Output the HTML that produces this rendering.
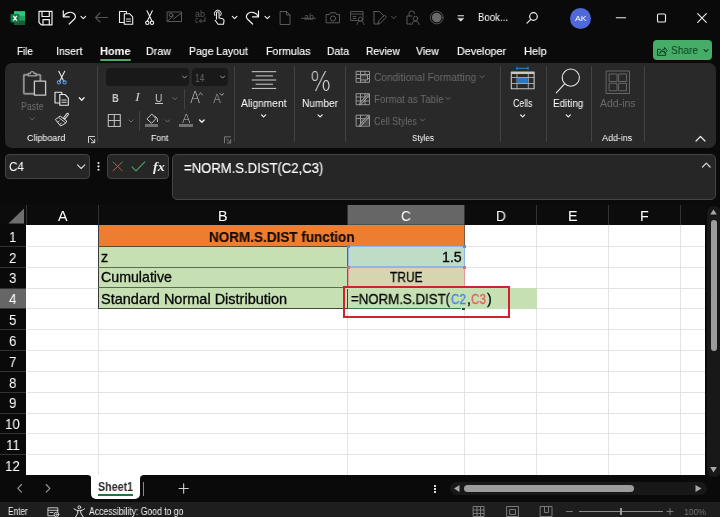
<!DOCTYPE html>
<html><head><meta charset="utf-8"><title>Excel</title>
<style>
*{box-sizing:border-box;margin:0;padding:0}
html,body{width:720px;height:517px;overflow:hidden;background:#0a0a0a}
body{position:relative;font-family:"Liberation Sans",sans-serif;color:#fff;font-size:12px}
.a{position:absolute}
.t{position:absolute;white-space:nowrap;line-height:1;transform-origin:0 0;will-change:transform}
svg{position:absolute;overflow:visible}
#ribbon{left:5px;top:62.8px;width:710.8px;height:85.2px;background:#292929;border-radius:7px}
.sep{position:absolute;width:1px;background:#424242}
.nb{background:#262626;border:1px solid #444;border-radius:4px}
.gl{position:absolute;background:#e3e3e3}
.hl{position:absolute;background:#333}
</style></head><body>
<!-- ===== ribbon panel ===== -->
<div class="a" id="ribbon"></div>
<!-- ===== formula bar boxes ===== -->
<div class="a nb" style="left:5px;top:154px;width:85px;height:25px"></div>
<div class="a nb" style="left:107px;top:154px;width:62px;height:25px"></div>
<div class="a nb" style="left:172px;top:154px;width:543.6px;height:46px;border-radius:5px"></div>
<div class="a" style="left:0;top:204px;width:705px;height:21px;background:#0c0c0c"></div>
<div class="a" style="left:347.3px;top:205px;width:116.9px;height:20.3px;background:#666"></div>
<div class="a" style="left:347.3px;top:224.3px;width:116.9px;height:1.2px;background:#45584c"></div>
<div class="a" style="left:0;top:288px;width:26.3px;height:20.5px;background:#666"></div>
<div class="a" style="left:26.2px;top:225px;width:678.8px;height:250.3px;background:#fff"></div>
<div class="gl" style="left:26.5px;top:245.8px;width:678.5px;height:1px"></div>
<div class="gl" style="left:26.5px;top:266.7px;width:678.5px;height:1px"></div>
<div class="gl" style="left:26.5px;top:287.5px;width:678.5px;height:1px"></div>
<div class="gl" style="left:26.5px;top:308.3px;width:678.5px;height:1px"></div>
<div class="gl" style="left:26.5px;top:329.1px;width:678.5px;height:1px"></div>
<div class="gl" style="left:26.5px;top:350.0px;width:678.5px;height:1px"></div>
<div class="gl" style="left:26.5px;top:370.8px;width:678.5px;height:1px"></div>
<div class="gl" style="left:26.5px;top:391.6px;width:678.5px;height:1px"></div>
<div class="gl" style="left:26.5px;top:412.5px;width:678.5px;height:1px"></div>
<div class="gl" style="left:26.5px;top:433.3px;width:678.5px;height:1px"></div>
<div class="gl" style="left:26.5px;top:454.1px;width:678.5px;height:1px"></div>
<div class="gl" style="left:98.0px;top:225px;width:1px;height:250px"></div>
<div class="gl" style="left:347.0px;top:225px;width:1px;height:250px"></div>
<div class="gl" style="left:464.0px;top:225px;width:1px;height:250px"></div>
<div class="gl" style="left:536.0px;top:225px;width:1px;height:250px"></div>
<div class="gl" style="left:608.0px;top:225px;width:1px;height:250px"></div>
<div class="gl" style="left:680.0px;top:225px;width:1px;height:250px"></div>
<div class="hl" style="left:26.0px;top:205px;width:1px;height:20px"></div>
<div class="hl" style="left:98.0px;top:205px;width:1px;height:20px"></div>
<div class="hl" style="left:347.0px;top:205px;width:1px;height:20px"></div>
<div class="hl" style="left:464.0px;top:205px;width:1px;height:20px"></div>
<div class="hl" style="left:536.0px;top:205px;width:1px;height:20px"></div>
<div class="hl" style="left:608.0px;top:205px;width:1px;height:20px"></div>
<div class="hl" style="left:680.0px;top:205px;width:1px;height:20px"></div>
<div class="hl" style="left:0;top:245.8px;width:26px;height:1px"></div>
<div class="hl" style="left:0;top:266.7px;width:26px;height:1px"></div>
<div class="hl" style="left:0;top:287.5px;width:26px;height:1px"></div>
<div class="hl" style="left:0;top:308.3px;width:26px;height:1px"></div>
<div class="hl" style="left:0;top:329.1px;width:26px;height:1px"></div>
<div class="hl" style="left:0;top:350.0px;width:26px;height:1px"></div>
<div class="hl" style="left:0;top:370.8px;width:26px;height:1px"></div>
<div class="hl" style="left:0;top:391.6px;width:26px;height:1px"></div>
<div class="hl" style="left:0;top:412.5px;width:26px;height:1px"></div>
<div class="hl" style="left:0;top:433.3px;width:26px;height:1px"></div>
<div class="hl" style="left:0;top:454.1px;width:26px;height:1px"></div>
<!-- tab underline + share -->
<div class="a" style="left:99.5px;top:59px;width:31.5px;height:2px;background:#4fa66b;border-radius:1px"></div>
<div class="a" style="left:653.3px;top:40.4px;width:58.4px;height:20px;background:#45ad68;border-radius:4px"></div>
<!-- avatar -->
<div class="a" style="left:569.5px;top:7.5px;width:21px;height:21px;border-radius:50%;background:#4f69d9"></div>
<!-- ribbon separators -->
<div class="sep" style="left:97px;top:66px;height:76px"></div>
<div class="sep" style="left:234px;top:66px;height:76px"></div>
<div class="sep" style="left:294px;top:66px;height:76px"></div>
<div class="sep" style="left:345px;top:66px;height:76px"></div>
<div class="sep" style="left:500px;top:66px;height:76px"></div>
<div class="sep" style="left:545.5px;top:66px;height:76px"></div>
<div class="sep" style="left:591px;top:66px;height:76px"></div>
<div class="sep" style="left:644px;top:66px;height:76px"></div>
<div class="sep" style="left:183.5px;top:89px;height:20px"></div>
<div class="sep" style="left:139px;top:110.5px;height:20px"></div>
<!-- font boxes -->
<div class="a" style="left:106px;top:67.5px;width:83px;height:18.5px;background:#191919;border-radius:4px"></div>
<div class="a" style="left:191.5px;top:67.5px;width:36px;height:18.5px;background:#191919;border-radius:4px"></div>
<!-- U underline, colour bars -->
<div class="a" style="left:155px;top:103px;width:7.5px;height:1px;background:#c8c8c8"></div>
<div class="a" style="left:145px;top:124.2px;width:13px;height:2.8px;background:#727272"></div>
<div class="a" style="left:179.4px;top:124.2px;width:13.6px;height:2.8px;background:#727272"></div>
<!-- cells fills -->
<div class="a" style="left:98.2px;top:225.3px;width:366.3px;height:20.5px;background:#ed7d31"></div>
<div class="a" style="left:98.2px;top:245.8px;width:249.3px;height:62.7px;background:#c6e0b4"></div>
<div class="a" style="left:347.5px;top:246.3px;width:117px;height:20.7px;background:#bedcc6"></div>
<div class="a" style="left:347.5px;top:267px;width:117px;height:21px;background:#d5d5b0"></div>
<div class="a" style="left:347.5px;top:288px;width:189px;height:20.5px;background:#c6e0b4"></div>
<!-- table borders -->
<div class="a" style="left:97.7px;top:225px;width:1px;height:84px;background:#3a3a3a"></div>
<div class="a" style="left:98px;top:245.5px;width:250px;height:1px;background:#5b4a30"></div>
<div class="a" style="left:98px;top:266.8px;width:250px;height:1px;background:#5b6b50"></div>
<div class="a" style="left:98px;top:287.2px;width:250px;height:1px;background:#5b6b50"></div>
<div class="a" style="left:98px;top:308.3px;width:250px;height:1px;background:#3f4a3a"></div>
<div class="a" style="left:347px;top:246px;width:1px;height:42px;background:#5b6b50"></div>
<div class="a" style="left:346.8px;top:288.5px;width:1.5px;height:20.5px;background:#2c4a38"></div>
<div class="a" style="left:464px;top:225px;width:1px;height:21px;background:#7a5a40"></div>
<div class="a" style="left:347.5px;top:245.5px;width:117px;height:1px;background:#8a7a60"></div>
<!-- C2 blue / C3 red range outlines -->
<div class="a" style="left:347.5px;top:246.3px;width:117px;height:21px;border:1px solid #8fb6e6"></div>
<div class="a" style="left:347.5px;top:267px;width:117px;height:21px;border:1px solid #e59a9a"></div>
<div class="a" style="left:346.5px;top:245.3px;width:3px;height:3px;background:#5b8fd8"></div>
<div class="a" style="left:462.5px;top:245.3px;width:3px;height:3px;background:#5b8fd8"></div>
<div class="a" style="left:346.5px;top:265.8px;width:3px;height:3px;background:#d86a8a"></div>
<div class="a" style="left:462.5px;top:265.8px;width:3px;height:3px;background:#d86a8a"></div>
<!-- active cell bottom border + handle -->
<div class="a" style="left:347.5px;top:307.7px;width:113px;height:1.6px;background:#3d7a52"></div>
<div class="a" style="left:462px;top:308px;width:3px;height:2.2px;background:#2a4a36"></div>
<!-- red callout -->
<div class="a" style="left:342.8px;top:285.8px;width:167.4px;height:32px;border:2.8px solid #d0222e"></div>
<!-- select-all triangle -->
<svg style="left:0;top:204px" width="27" height="22"><polygon points="8.5,19.5 24,19.5 24,4.5" fill="#6e6e6e"/></svg>
<!-- scrollbars -->
<div class="a" style="left:706.5px;top:205.5px;width:14px;height:271px;background:#181818;border-radius:7px"></div>
<div class="a" style="left:710.5px;top:219.5px;width:6.5px;height:131.5px;background:#9c9c9c;border-radius:3.5px"></div>
<svg style="left:706px;top:205px" width="14" height="272"><polygon points="4.2,9.5 10.8,9.5 7.5,4.5" fill="#a8a8a8"/><polygon points="4.2,262 10.8,262 7.5,267.5" fill="#a8a8a8"/></svg>
<div class="a" style="left:449.5px;top:481.8px;width:257px;height:13.4px;background:#181818;border-radius:7px"></div>
<div class="a" style="left:464px;top:484.6px;width:170px;height:7px;background:#9c9c9c;border-radius:3.5px"></div>
<svg style="left:449px;top:481px" width="258" height="15"><polygon points="10.5,4 10.5,11 5,7.5" fill="#a8a8a8"/><polygon points="246.5,4 246.5,11 252.5,7.5" fill="#a8a8a8"/></svg>
<div class="a" style="left:434.2px;top:485px;width:1.6px;height:1.6px;background:#ddd;box-shadow:0 3px 0 #ddd,0 6px 0 #ddd"></div>
<!-- sheet tab -->
<div class="a" style="left:91.4px;top:475px;width:48.7px;height:23.6px;background:#fff;border-radius:0 0 5px 5px"></div>
<svg style="left:0;top:0" width="720" height="517"><path d="M87.400 475h4v4a4 4 0 0 0-4-4zM144.100 475h-4v4a4 4 0 0 1 4-4z" fill="#fff"/></svg>
<div class="a" style="left:98px;top:494.4px;width:35px;height:2px;background:#217346"></div>
<div class="a" style="left:143px;top:481.5px;width:1px;height:14.2px;background:#8a8a8a"></div>
<!-- status bar -->
<div class="a" style="left:0;top:502px;width:720px;height:15px;background:#1e1e1e"></div>
<div class="a" style="left:579px;top:511px;width:83.5px;height:1px;background:#8a8a8a"></div>
<div class="a" style="left:620px;top:508px;width:1.5px;height:7px;background:#9a9a9a"></div>

<svg style="left:0;top:0" width="720" height="517" viewBox="0 0 720 517" fill="none" stroke-linecap="round" stroke-linejoin="round">
<!-- ===== QAT ===== -->
<!-- excel logo -->
<g>
<rect x="14" y="11.3" width="11" height="13.7" rx="1" fill="#21a366"/>
<rect x="14" y="11.3" width="11" height="4.5" fill="#33c481"/>
<rect x="14" y="20.5" width="11" height="4.5" rx="1" fill="#185c37"/>
<rect x="10.5" y="14" width="9" height="8.5" rx="1" fill="#107c41"/>
<path d="M13.300 15.800l3.500 4.900M16.800 15.800l-3.500 4.900" stroke="#fff" stroke-width="1.300" stroke-linecap="butt"/>
</g>
<!-- save -->
<g stroke="#f0f0f0" stroke-width="1.2">
<path d="M39 11.300h13v13.500H41.300L39 22.500z"/>
<path d="M42 11.500v5h7.300v-5M43 24.600v-5h6.300v5"/>
</g>
<!-- undo -->
<g stroke="#f0f0f0" stroke-width="1.2">
<path d="M63.300 10.800v6h6"/>
<path d="M63.600 16.500C65.500 12.500 70.500 11 73.700 13.500C76 15.300 75.800 17.700 74.200 19.200L69.200 24"/>
<path d="M81 16.300l2.300 2.300l2.300-2.300" stroke-width="1.100"/>
</g>
<!-- back arrow disabled -->
<path d="M107.500 17.500H95.500M100 13l-4.500 4.500l4.500 4.500" stroke="#555" stroke-width="1.100"/>
<!-- paste/copy -->
<g stroke="#f0f0f0" stroke-width="1.1">
<path d="M124 22.500h-4.500v-11h7v2"/>
<path d="M124.300 13.700h5.200l3.200 3.200v7.300h-8.400z" fill="#0a0a0a"/>
<path d="M126.300 19h4.400M126.300 21.300h4.400" stroke-width="0.9"/>
</g>
<!-- scissors -->
<g stroke="#f0f0f0" stroke-width="1.1">
<path d="M147 10.800l4.800 10M152.300 10.800l-4.800 10"/>
<circle cx="147.300" cy="22.800" r="1.700"/><circle cx="152" cy="22.800" r="1.700"/>
</g>
<!-- mail gray -->
<g stroke="#5a5a5a" stroke-width="1">
<rect x="167.500" y="12" width="14" height="9.500"/>
<path d="M167.500 21l6-5M181.500 13l-8 6"/>
<circle cx="171" cy="15" r="1.800"/>
</g>
<!-- ab arrows gray -->
<g stroke="#5a5a5a" stroke-width="0.9">
<path d="M199.500 21h5.500M201.300 19.200l-1.800 1.800l1.800 1.800M205 17.500v3.500"/>
</g>
<!-- touch hand -->
<g stroke="#f0f0f0" stroke-width="1.1">
<path d="M216.500 19v-6a1.300 1.300 0 0 1 2.600 0v5l3.500.8c1 .3 1.500 1 1.400 2l-.5 3.500h-5.500l-2.800-4"/>
<path d="M214.800 15.500a3.500 3.500 0 1 1 6 0" stroke-width="1"/>
<path d="M232.300 16.300l2.300 2.300l2.300-2.300"/>
</g>
<!-- redo -->
<g stroke="#f0f0f0" stroke-width="1.2">
<path d="M258.500 10.800v6h-6"/>
<path d="M258.200 16.500C256.300 12.500 251.300 11 248.100 13.500C245.800 15.300 246 17.700 247.600 19.200L252.600 24"/>
<path d="M265 16.300l2.300 2.300l2.300-2.300" stroke-width="1.100"/>
</g>
<!-- new doc gray -->
<path d="M280.500 11.500h6l3.500 3.500v9.500h-9.500zM286.500 11.500v3.500h3.500" stroke="#5a5a5a" stroke-width="1"/>
<!-- strike ab -->
<path d="M301.500 18.300h14" stroke="#5a5a5a" stroke-width="0.9"/>
<!-- camera gray -->
<g stroke="#5a5a5a" stroke-width="1">
<path d="M326.500 14.500h3l1-1.800h5l1 1.800h3v8.300h-13z"/>
<circle cx="333" cy="18.500" r="2.600"/>
</g>
<!-- form icon gray -->
<g stroke="#5a5a5a" stroke-width="0.9">
<rect x="351" y="11.500" width="12" height="9"/>
<path d="M351 14h12M353 16.500h3M353 18.500h3"/>
<circle cx="360.500" cy="19" r="2" fill="#0a0a0a"/>
<path d="M357 24.500c.3-2.300 1.700-3.300 3.500-3.300s3.200 1 3.500 3.300" fill="#0a0a0a"/>
</g>
<!-- doc pencil gray -->
<g stroke="#5a5a5a" stroke-width="1">
<path d="M374 11.500h5.500l4 4v1M374 11.500v12.500h5"/>
<path d="M378 23.500l1-3l5.500-5.500l2 2l-5.500 5.500z"/>
<path d="M391.500 16.300l2.300 2.300l2.300-2.300"/>
</g>
<!-- lock person gray -->
<g stroke="#5a5a5a" stroke-width="1">
<path d="M409 16v-2.300a2.800 2.800 0 0 1 5.600 0"/>
<path d="M412 16h-5v8h4"/>
<circle cx="415.500" cy="18.500" r="2.200"/>
<path d="M411.800 24.500c.3-2.300 1.700-3.300 3.700-3.300s3.400 1 3.700 3.300"/>
</g>
<!-- record -->
<circle cx="436.700" cy="17.500" r="6.400" stroke="#5a5a5a" stroke-width="0.9"/>
<circle cx="436.700" cy="17.500" r="4.800" fill="#6a6a6a"/>
<!-- customize qat -->
<path d="M458 15.800h5.600" stroke="#e8e8e8" stroke-width="1.100"/>
<path d="M458 18.500l2.800 2.800l2.800-2.800z" fill="#e8e8e8" stroke="#e8e8e8" stroke-width="0.500"/>
<!-- search -->
<g stroke="#f0f0f0" stroke-width="1.2">
<circle cx="533.500" cy="16.500" r="3.800"/>
<path d="M530.800 19.300l-3.800 3.800"/>
</g>
<!-- window controls -->
<path d="M616.300 17.800h9.300" stroke="#f0f0f0" stroke-width="1.100"/>
<rect x="657.500" y="14" width="8" height="8" rx="1.300" stroke="#f0f0f0" stroke-width="1.100"/>
<path d="M697.700 13.700l8.600 8.600M706.300 13.700l-8.600 8.600" stroke="#f0f0f0" stroke-width="1.100"/>

<!-- ===== RIBBON ===== -->
<!-- paste -->
<g>
<rect x="23.800" y="74.800" width="16.600" height="19" rx="1" stroke="#8e8e8e" stroke-width="1.900"/>
<path d="M28.300 75.800v-2.300h2a1.900 1.900 0 0 1 3.800 0h2v2.300z" stroke="#a0a0a0" stroke-width="1.300" fill="#292929"/>
<rect x="34.400" y="81.200" width="11.200" height="14" fill="#292929" stroke="#cacaca" stroke-width="1.300"/>
</g>
<path d="M30 117.800l2.100 2.100l2.100-2.100" stroke="#6a6a6a" stroke-width="1"/>
<!-- cut -->
<g stroke-width="1.100">
<path d="M58.800 71.300l5.200 10.500M64.700 71.300l-5.200 10.500" stroke="#e8e8e8"/>
<circle cx="58.900" cy="82.300" r="1.700" stroke="#4a90d9"/><circle cx="64.600" cy="82.300" r="1.700" stroke="#4a90d9"/>
</g>
<!-- copy -->
<g stroke="#e8e8e8" stroke-width="1.100">
<path d="M59.500 103h-4.500v-10.800h6.800v2"/>
<path d="M59.800 94.500h5.200l3.300 3.300v7.500h-8.500z" fill="#292929"/>
<path d="M62 100h4.200M62 102.300h4.200" stroke-width="0.900"/>
</g>
<path d="M79.300 97.800l2.400 2.400l2.400-2.400" stroke="#f0f0f0" stroke-width="1.300"/>
<!-- format painter -->
<g stroke="#dcdcdc" stroke-width="1">
<path d="M67.600 114.200l-3 3.700" stroke-width="2.800"/>
<path d="M67.600 114.200l-3 3.700" stroke="#292929" stroke-width="0.900"/>
<path d="M60.500 116.300l6.300 4.700l-1.300 2.300l-4.900 2.700l-5-6.200z"/>
<path d="M59.300 118l6.300 4.800" stroke-width="0.900"/>
<path d="M57.600 122.200l1.600-1.100M59.700 124.400l1.600-1.100" stroke-width="0.800"/>
</g>
<!-- launchers -->
<g stroke="#d0d0d0" stroke-width="1">
<path d="M94.500 136.500h-6v6M90.500 138.500l4 4M94.700 139.300v3.400h-3.400"/>
</g>
<g stroke="#7a7a7a" stroke-width="1">
<path d="M230.500 136.800h-6v6M226.500 138.800l4 4M230.700 139.600v3.400h-3.400"/>
</g>
<!-- font box chevrons -->
<path d="M182.500 76l2.100 2.100l2.100-2.100" stroke="#9a9a9a" stroke-width="1"/>
<path d="M220.500 76l2.100 2.100l2.100-2.100" stroke="#9a9a9a" stroke-width="1"/>
<path d="M172.800 97.600l2.100 2.100l2.100-2.100" stroke="#6e6e6e" stroke-width="1"/>
<!-- A^ Av carets -->
<path d="M198.800 94.800l1.800-1.800l1.800 1.800" stroke="#bcbcbc" stroke-width="0.900"/>
<path d="M220 93.500l1.800 1.800l1.800-1.800" stroke="#bcbcbc" stroke-width="0.900"/>
<!-- borders -->
<g stroke="#bcbcbc" stroke-width="1.100">
<rect x="108.300" y="114.500" width="12" height="12"/>
<path d="M114.300 114.500v12M108.300 120.500h12"/>
</g>
<path d="M128.900 119.900l2.100 2.100l2.100-2.100" stroke="#6e6e6e" stroke-width="1"/>
<!-- fill bucket -->
<g stroke="#c8c8c8" stroke-width="1">
<path d="M152.100 114.300L156 118.700L151.500 123.300L147.100 119.200z"/>
<path d="M154.800 116.300c2.200.7 3 2.700 2.700 5.200"/>
</g>
<path d="M165.400 119.900l2.100 2.100l2.100-2.100" stroke="#6e6e6e" stroke-width="1"/>
<path d="M199.600 120l2.300 2.300l2.300-2.300" stroke="#f0f0f0" stroke-width="1.300"/>
<!-- alignment -->
<g stroke="#cfcfcf" stroke-width="1">
<path d="M252.200 71.700h23.600M256 75.900h16.600M252.200 80h23.600M256 84.200h16.600M252.200 88.400h23.600"/>
</g>
<g stroke="#f0f0f0" stroke-width="1.200">
<path d="M261.500 114.800l2.100 2.100l2.100-2.100"/>
<path d="M318 114.800l2.100 2.100l2.100-2.100"/>
<path d="M520.500 114.800l2.100 2.100l2.100-2.100"/>
<path d="M566.200 114.800l2.100 2.100l2.100-2.100"/>
</g>
<!-- styles icons -->
<g stroke="#969696" stroke-width="1">
<rect x="356.500" y="71.300" width="13" height="11"/>
<path d="M356.500 74.500h13M356.500 78.500h13M360.500 71.300v11M365 71.300v11"/>
<rect x="361" y="75" width="6.500" height="5" fill="#3a3a3a"/>
<rect x="356.500" y="93.700" width="13" height="11"/>
<path d="M356.500 97h13M356.500 101h13M360.500 93.700v11M365 93.700v11"/>
<path d="M369 95.500l-7.500 8.500l-2 .8l.6-2.200l7.400-8.200z" fill="#5a5a5a" stroke="#b0b0b0" stroke-width="0.800"/>
<rect x="356.500" y="115.200" width="13" height="11"/>
<path d="M356.500 118.500h13M360.500 115.200v11"/>
<rect x="361" y="118.800" width="8" height="7" fill="#4a4a4a" stroke="none"/>
<path d="M369 117l-7.500 8.500l-2 .8l.6-2.200l7.400-8.200z" fill="#5a5a5a" stroke="#b0b0b0" stroke-width="0.800"/>
</g>
<g stroke="#6a6a6a" stroke-width="1">
<path d="M480 75.800l2 2l2-2"/>
<path d="M446 97.500l2 2l2-2"/>
<path d="M420.600 119l2 2l2-2"/>
</g>
<!-- cells icon -->
<g>
<path d="M517 68.300h11M517 67v2.600M528 67v2.600" stroke="#2b88d8" stroke-width="1"/>
<rect x="511.300" y="72" width="22.800" height="16.800" stroke="#c8c8c8" stroke-width="1.100"/>
<rect x="511.300" y="72" width="22.800" height="2" fill="#c8c8c8"/>
<path d="M511.300 77.500h22.800M511.300 83.500h22.800M517 74v14.800M528.300 74v14.800" stroke="#b0b0b0" stroke-width="0.900"/>
<rect x="517.500" y="78" width="10.300" height="5" fill="#1f7ad0"/>
</g>
<!-- editing magnifier -->
<g stroke="#e8e8e8" stroke-width="1.100">
<circle cx="570.800" cy="77.600" r="8.600"/>
<path d="M564.600 83.800l-8.300 9"/>
</g>
<!-- add-ins -->
<g stroke="#666" stroke-width="1">
<rect x="606.500" y="71" width="23" height="22.500"/>
<rect x="609.500" y="74" width="7.500" height="7.500"/><rect x="619" y="74" width="7.500" height="7.500"/>
<rect x="609.500" y="83.300" width="7.500" height="7.500"/><rect x="619" y="83.300" width="7.500" height="7.500"/>
</g>
<!-- collapse ribbon -->
<path d="M696 141l4.500-4.500l4.500 4.500" stroke="#e8e8e8" stroke-width="1.200"/>
<!-- share icon + chevron -->
<g stroke="#0b3d1c" stroke-width="1">
<path d="M660.300 49.300h-2.800v6h8.300v-1.800"/>
<path d="M659.800 53.200c.5-2.500 2.300-3.700 4.600-3.700v-2l2.900 2.900l-2.900 2.900v-2c-2 0-3.500.4-4.600 1.900z"/>
<path d="M704 49.600l2 2l2-2" stroke-width="1.100"/>
</g>
<!-- ===== FORMULA BAR ===== -->
<path d="M77.500 164.800l3.700 3.700l3.700-3.700" stroke="#d8d8d8" stroke-width="1.100"/>
<g fill="#e8e8e8"><circle cx="98.500" cy="163" r="1.050"/><circle cx="98.500" cy="166.400" r="1.050"/><circle cx="98.500" cy="169.800" r="1.050"/></g>
<path d="M113 162l9.300 8.800M122.300 162l-9.300 8.800" stroke="#cc5350" stroke-width="1"/>
<path d="M132 166.800l4 4l8.800-9" stroke="#4aa66a" stroke-width="1.050"/>
<path d="M702.500 167l3.800-3.800l3.800 3.800" stroke="#d8d8d8" stroke-width="1.200"/>
<!-- ===== SHEET BAR ===== -->
<g stroke="#9a9a9a" stroke-width="1.100">
<path d="M21.500 484.500l-3.700 3.800l3.700 3.800"/>
<path d="M46.200 484.500l3.700 3.800l-3.700 3.800"/>
</g>
<path d="M179 488.500h9.300M183.650 483.850v9.300" stroke="#d0d0d0" stroke-width="1.100"/>
<!-- ===== STATUS BAR ===== -->
<g stroke="#d8d8d8" stroke-width="0.900">
<rect x="48.300" y="507.800" width="9.500" height="8"/>
<path d="M48.300 510.300h9.500M50 512.500h3"/>
<circle cx="56.500" cy="514.500" r="2.300" fill="#1e1e1e"/>
<circle cx="56.500" cy="514.500" r="0.700"/>
</g>
<g stroke="#e8e8e8" stroke-width="1">
<circle cx="79.300" cy="507.300" r="1.400"/>
<path d="M74 508.800c1.500 1.300 3.500 1.800 5.300 1.800s3.800-.5 5.300-1.800M77.800 510.600v2.600l-2.300 3.800M80.800 510.600v2.600l2.500 3.800"/>
</g>
<g stroke="#7a7a7a" stroke-width="1">
<rect x="473.500" y="506.500" width="10.500" height="10"/><path d="M473.500 510h10.500M473.500 513.500h10.500M477 506.500v10M480.500 506.500v10"/>
<rect x="507" y="506.500" width="11.500" height="10"/><rect x="510" y="509.500" width="5.500" height="5"/>
<path d="M540.500 506.500h11.500v10h-11.500zM544.500 506.500v6h4v-6"/>
<path d="M566.500 511.500h6M667 511.500h6M670 508.500v6"/>
</g>
</svg>

<div class="t" style="left:16.75px;top:46.37px;font-size:11.5px;color:#fff;-webkit-text-stroke:0.15px #fff;transform:scaleX(0.850)">File</div>
<div class="t" style="left:55.50px;top:46.37px;font-size:11.5px;color:#fff;-webkit-text-stroke:0.15px #fff;transform:scaleX(0.921)">Insert</div>
<div class="t" style="left:99.50px;top:46.37px;font-size:11.5px;color:#fff;font-weight:700;transform:scaleX(0.955)">Home</div>
<div class="t" style="left:146.20px;top:46.37px;font-size:11.5px;color:#fff;-webkit-text-stroke:0.15px #fff;transform:scaleX(0.931)">Draw</div>
<div class="t" style="left:188.75px;top:46.37px;font-size:11.5px;color:#fff;-webkit-text-stroke:0.15px #fff;transform:scaleX(0.910)">Page Layout</div>
<div class="t" style="left:265.50px;top:46.37px;font-size:11.5px;color:#fff;-webkit-text-stroke:0.15px #fff;transform:scaleX(0.928)">Formulas</div>
<div class="t" style="left:327.00px;top:46.37px;font-size:11.5px;color:#fff;-webkit-text-stroke:0.15px #fff;transform:scaleX(0.905)">Data</div>
<div class="t" style="left:365.50px;top:46.37px;font-size:11.5px;color:#fff;-webkit-text-stroke:0.15px #fff;transform:scaleX(0.895)">Review</div>
<div class="t" style="left:416.25px;top:46.37px;font-size:11.5px;color:#fff;-webkit-text-stroke:0.15px #fff;transform:scaleX(0.920)">View</div>
<div class="t" style="left:457.00px;top:46.37px;font-size:11.5px;color:#fff;-webkit-text-stroke:0.15px #fff;transform:scaleX(0.935)">Developer</div>
<div class="t" style="left:523.70px;top:46.37px;font-size:11.5px;color:#fff;-webkit-text-stroke:0.15px #fff;transform:scaleX(0.960)">Help</div>
<div class="t" style="left:671.00px;top:45.07px;font-size:11.5px;color:#0b3d1c;transform:scaleX(0.883)">Share</div>
<div class="t" style="left:478.00px;top:12.39px;font-size:11px;color:#fff;transform:scaleX(0.876)">Book...</div>
<div class="t" style="left:574.50px;top:14.53px;font-size:8px;color:#fff;transform:scaleX(1.078)">AK</div>
<div class="t" style="left:26.75px;top:134.21px;font-size:9.2px;color:#fff;transform:scaleX(0.973)">Clipboard</div>
<div class="t" style="left:150.50px;top:134.21px;font-size:9.2px;color:#fff;transform:scaleX(0.952)">Font</div>
<div class="t" style="left:411.50px;top:134.21px;font-size:9.2px;color:#fff;transform:scaleX(0.871)">Styles</div>
<div class="t" style="left:601.80px;top:134.21px;font-size:9.2px;color:#fff;transform:scaleX(0.969)">Add-ins</div>
<div class="t" style="left:20.80px;top:101.31px;font-size:10.5px;color:#6e6e6e;transform:scaleX(0.838)">Paste</div>
<div class="t" style="left:241.20px;top:98.01px;font-size:10.5px;color:#fff;transform:scaleX(0.974)">Alignment</div>
<div class="t" style="left:302.30px;top:98.01px;font-size:10.5px;color:#fff;transform:scaleX(0.964)">Number</div>
<div class="t" style="left:513.00px;top:98.01px;font-size:10.5px;color:#fff;transform:scaleX(0.835)">Cells</div>
<div class="t" style="left:553.00px;top:98.01px;font-size:10.5px;color:#fff;transform:scaleX(0.944)">Editing</div>
<div class="t" style="left:600.00px;top:98.01px;font-size:10.5px;color:#6a6a6a;transform:scaleX(0.994)">Add-ins</div>
<div class="t" style="left:373.80px;top:72.21px;font-size:10.5px;color:#6a6a6a;transform:scaleX(0.967)">Conditional Formatting</div>
<div class="t" style="left:373.80px;top:94.01px;font-size:10.5px;color:#6a6a6a;transform:scaleX(0.926)">Format as Table</div>
<div class="t" style="left:373.80px;top:115.51px;font-size:10.5px;color:#6a6a6a;transform:scaleX(0.865)">Cell Styles</div>
<div class="t" style="left:195.00px;top:72.81px;font-size:10.5px;color:#6a6a6a;transform:scaleX(0.796)">14</div>
<div class="t" style="left:111.70px;top:92.59px;font-size:11px;color:#c8c8c8;font-weight:700;transform:scaleX(0.855)">B</div>
<div class="t" style="left:134.60px;top:92.36px;font-size:11.5px;color:#c8c8c8;font-style:italic;font-family:'Liberation Serif',serif;transform:scaleX(1.275)">I</div>
<div class="t" style="left:154.90px;top:92.59px;font-size:11px;color:#c8c8c8;transform:scaleX(0.930)">U</div>
<div class="t" style="left:310.00px;top:68.34px;font-size:27px;color:#d8d8d8;font-weight:200;font-family:'DejaVu Sans Light','DejaVu Sans',sans-serif;transform:scaleX(0.819)">%</div>
<div class="t" style="left:9.00px;top:161.12px;font-size:12.5px;color:#fff;transform:scaleX(0.938)">C4</div>
<div class="t" style="left:183.75px;top:160.75px;font-size:14px;color:#fff;-webkit-text-stroke:0.15px #fff;transform:scaleX(0.935)">=NORM.S.DIST(C2,C3)</div>
<div class="t" style="left:152.70px;top:159.59px;font-size:13.5px;color:#ececec;font-weight:700;font-style:italic;font-family:'Liberation Serif',serif;transform:scaleX(1.049)">fx</div>
<div class="t" style="left:209.00px;top:230.08px;font-size:14.2px;color:#150a02;font-weight:700;-webkit-text-stroke:0.12px #150a02;transform:scaleX(0.952)">NORM.S.DIST function</div>
<div class="t" style="left:101.40px;top:249.78px;font-size:14.2px;color:#050505;-webkit-text-stroke:0.3px #050505">z</div>
<div class="t" style="left:442.00px;top:249.78px;font-size:14.2px;color:#050505;-webkit-text-stroke:0.3px #050505;transform:scaleX(0.993)">1.5</div>
<div class="t" style="left:101.40px;top:270.48px;font-size:14.2px;color:#050505;-webkit-text-stroke:0.3px #050505;transform:scaleX(0.999)">Cumulative</div>
<div class="t" style="left:390.20px;top:270.38px;font-size:14.2px;color:#050505;-webkit-text-stroke:0.3px #050505;transform:scaleX(0.841)">TRUE</div>
<div class="t" style="left:101.40px;top:291.78px;font-size:14.2px;color:#050505;-webkit-text-stroke:0.3px #050505;transform:scaleX(1.022)">Standard Normal Distribution</div>
<div class="t" style="left:350.50px;top:291.88px;font-size:14.2px;color:#050505;-webkit-text-stroke:0.3px #050505;transform:scaleX(0.934)">=NORM.S.DIST(</div>
<div class="t" style="left:451.20px;top:291.88px;font-size:14.2px;color:#4a86d8;-webkit-text-stroke:0.3px #4a86d8;transform:scaleX(0.827)">C2</div>
<div class="t" style="left:466.80px;top:291.88px;font-size:14.2px;color:#050505;-webkit-text-stroke:0.3px #050505">,</div>
<div class="t" style="left:470.50px;top:291.88px;font-size:14.2px;color:#e06060;-webkit-text-stroke:0.3px #e06060;transform:scaleX(0.827)">C3</div>
<div class="t" style="left:486.80px;top:291.88px;font-size:14.2px;color:#050505;-webkit-text-stroke:0.3px #050505">)</div>
<div class="t" style="left:98.00px;top:480.92px;font-size:12.5px;color:#2a2a2a;font-weight:700;transform:scaleX(0.854)">Sheet1</div>
<div class="t" style="left:7.60px;top:506.74px;font-size:10px;color:#f2f2f2;transform:scaleX(0.828)">Enter</div>
<div class="t" style="left:88.90px;top:506.74px;font-size:10px;color:#f2f2f2;transform:scaleX(0.862)">Accessibility: Good to go</div>
<div class="t" style="left:684.00px;top:507.26px;font-size:9.5px;color:#777;transform:scaleX(0.905)">100%</div>
<div class="t" style="left:57.97px;top:208.80px;font-size:14.3px;color:#fff;transform:scaleX(0.950)">A</div>
<div class="t" style="left:218.47px;top:208.80px;font-size:14.3px;color:#fff;transform:scaleX(0.950)">B</div>
<div class="t" style="left:401.09px;top:208.80px;font-size:14.3px;color:#fff;transform:scaleX(0.950)">C</div>
<div class="t" style="left:495.59px;top:208.80px;font-size:14.3px;color:#fff;transform:scaleX(0.950)">D</div>
<div class="t" style="left:567.97px;top:208.80px;font-size:14.3px;color:#fff;transform:scaleX(0.950)">E</div>
<div class="t" style="left:640.35px;top:208.80px;font-size:14.3px;color:#fff;transform:scaleX(0.950)">F</div>
<div class="t" style="left:8.80px;top:229.80px;font-size:14.3px;color:#fff;transform:scaleX(0.930)">1</div>
<div class="t" style="left:8.80px;top:250.63px;font-size:14.3px;color:#fff;transform:scaleX(0.930)">2</div>
<div class="t" style="left:8.80px;top:271.46px;font-size:14.3px;color:#fff;transform:scaleX(0.930)">3</div>
<div class="t" style="left:8.80px;top:292.29px;font-size:14.3px;color:#fff;transform:scaleX(0.930)">4</div>
<div class="t" style="left:8.80px;top:313.12px;font-size:14.3px;color:#fff;transform:scaleX(0.930)">5</div>
<div class="t" style="left:8.80px;top:333.95px;font-size:14.3px;color:#fff;transform:scaleX(0.930)">6</div>
<div class="t" style="left:8.80px;top:354.78px;font-size:14.3px;color:#fff;transform:scaleX(0.930)">7</div>
<div class="t" style="left:8.80px;top:375.61px;font-size:14.3px;color:#fff;transform:scaleX(0.930)">8</div>
<div class="t" style="left:8.80px;top:396.44px;font-size:14.3px;color:#fff;transform:scaleX(0.930)">9</div>
<div class="t" style="left:5.10px;top:417.27px;font-size:14.3px;color:#fff;transform:scaleX(0.930)">10</div>
<div class="t" style="left:5.60px;top:438.10px;font-size:14.3px;color:#fff;transform:scaleX(0.930)">11</div>
<div class="t" style="left:5.10px;top:458.93px;font-size:14.3px;color:#fff;transform:scaleX(0.930)">12</div>
<div class="t" style="left:189.50px;top:91.10px;font-size:15px;color:#c0c0c0;font-weight:200;font-family:'DejaVu Sans Light','DejaVu Sans',sans-serif;transform:scaleX(0.974)">A</div>
<div class="t" style="left:212.80px;top:93.12px;font-size:12.5px;color:#c0c0c0;font-weight:200;font-family:'DejaVu Sans Light','DejaVu Sans',sans-serif;transform:scaleX(0.934)">A</div>
<div class="t" style="left:182.00px;top:112.59px;font-size:12.3px;color:#c4c4c4;font-weight:200;font-family:'DejaVu Sans Light','DejaVu Sans',sans-serif;transform:scaleX(1.021)">A</div>
<div class="t" style="left:194.50px;top:10.10px;font-size:8.5px;color:#5a5a5a;transform:scaleX(1.056)">ab</div>
<div class="t" style="left:194.50px;top:16.10px;font-size:8.5px;color:#5a5a5a;transform:scaleX(0.824)">c</div>
<div class="t" style="left:303.50px;top:13.38px;font-size:9px;color:#5a5a5a;transform:scaleX(0.998)">ab</div>
</body></html>
